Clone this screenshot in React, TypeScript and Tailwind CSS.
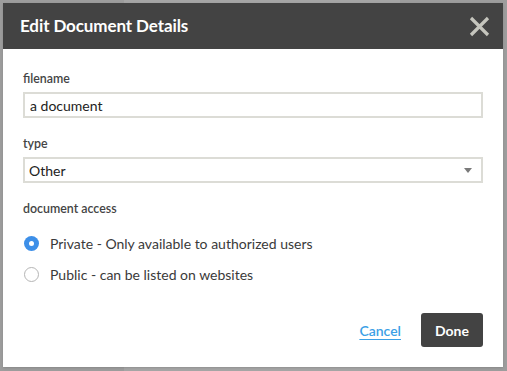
import React, { useState } from 'react';

const font = { fontFamily: 'Lato, "Open Sans", Arial, sans-serif' };

function Radio({ checked, label, onClick }: { checked: boolean; label: string; onClick: () => void }) {
  return (
    <button type="button" onClick={onClick} className="flex items-center h-5 text-left">
      {checked ? (
        <span className="w-[15px] h-[15px] rounded-full bg-[#3d8fe8] flex items-center justify-center ml-[1px]">
          <span className="w-[5px] h-[5px] rounded-full bg-white" />
        </span>
      ) : (
        <span className="w-[15px] h-[15px] rounded-full border border-[#b5b5b5] bg-white ml-[1px]" />
      )}
      <span className="ml-[11px] text-[14px] text-[#3a3a3a]">{label}</span>
    </button>
  );
}

export default function App() {
  const [access, setAccess] = useState<'private' | 'public'>('private');
  const [name, setName] = useState('a document');

  return (
    <div className="relative w-[507px] h-[371px] overflow-hidden bg-[#9d9d9d]" style={font}>
      {/* page content seen through the backdrop */}
      <div className="flex h-full">
        <div className="w-[124px] h-full" />
        <div className="w-[276px] h-full bg-[#a6a6a6]" />
      </div>

      <div className="absolute left-[3px] top-[3px] w-[500px] h-[364px] bg-white flex flex-col shadow-sm">
        <div className="h-[46px] bg-[#434343] flex items-center justify-between pl-[17px] pr-[13px] shrink-0">
          <h2 className="text-white font-bold text-[17px] tracking-[-0.1px]">Edit Document Details</h2>
          <svg width="21" height="21" viewBox="0 0 21 21" className="mt-[1px]">
            <path d="M2 2 L19 19 M19 2 L2 19" stroke="#c5c5bd" strokeWidth="3.2" strokeLinecap="butt" />
          </svg>
        </div>

        <div className="flex flex-col px-[20px] pt-[23px] pb-[20px] flex-1">
          <label className="text-[12.4px] font-semibold text-[#444] leading-[14px]">filename</label>
          <input
            value={name}
            onChange={(e) => setName(e.target.value)}
            className="mt-[6px] h-[26px] w-full border-2 border-[#dcdcd6] px-[5px] text-[14px] text-[#222] outline-none"
          />

          <label className="mt-[19px] text-[12.4px] font-semibold text-[#444] leading-[14px]">type</label>
          <div className="mt-[6px] h-[26px] w-full border-2 border-[#dcdcd6] pl-[4px] pr-[9px] flex items-center justify-between">
            <span className="text-[14px] text-[#222]">Other</span>
            <svg width="8" height="5" viewBox="0 0 8 5">
              <path d="M0 0 H8 L4 5 Z" fill="#7a7a7a" />
            </svg>
          </div>

          <label className="mt-[19px] text-[12.4px] font-semibold text-[#444] leading-[14px]">document access</label>
          <div className="mt-[17px] flex flex-col gap-[11px]">
            <Radio
              checked={access === 'private'}
              label="Private - Only available to authorized users"
              onClick={() => setAccess('private')}
            />
            <Radio
              checked={access === 'public'}
              label="Public - can be listed on websites"
              onClick={() => setAccess('public')}
            />
          </div>

          <div className="mt-auto flex items-center justify-end">
            <a href="#" className="text-[14px] font-semibold text-[#3ba0e6] underline underline-offset-[3px] mr-[20px]">
              Cancel
            </a>
            <button className="h-[34px] w-[62px] rounded-[3px] bg-[#434343] text-white font-bold text-[14px]">
              Done
            </button>
          </div>
        </div>
      </div>
    </div>
  );
}
